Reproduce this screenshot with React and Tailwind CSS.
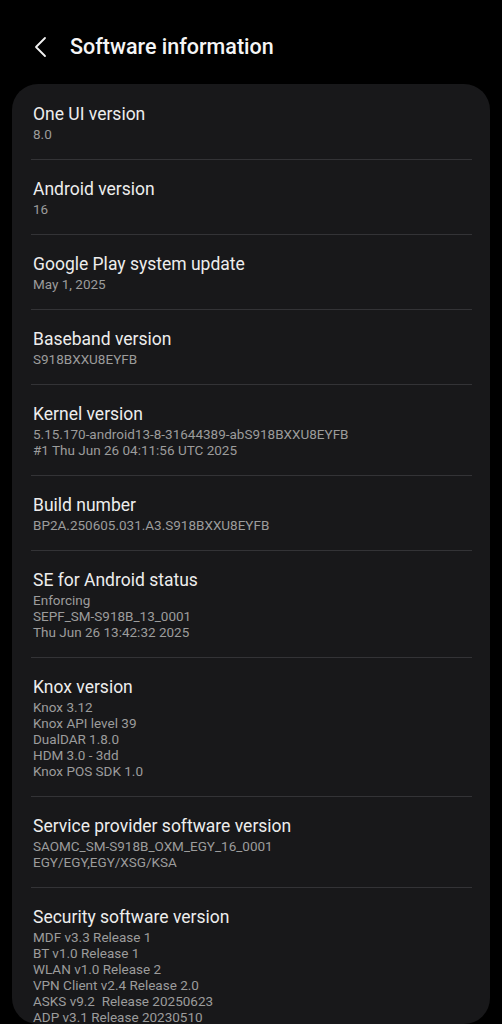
import React from 'react';

const items = [
  { title: 'One UI version', lines: ['8.0'] },
  { title: 'Android version', lines: ['16'] },
  { title: 'Google Play system update', lines: ['May 1, 2025'] },
  { title: 'Baseband version', lines: ['S918BXXU8EYFB'] },
  {
    title: 'Kernel version',
    lines: ['5.15.170-android13-8-31644389-abS918BXXU8EYFB', '#1 Thu Jun 26 04:11:56 UTC 2025'],
  },
  { title: 'Build number', lines: ['BP2A.250605.031.A3.S918BXXU8EYFB'] },
  {
    title: 'SE for Android status',
    lines: ['Enforcing', 'SEPF_SM-S918B_13_0001', 'Thu Jun 26 13:42:32 2025'],
  },
  {
    title: 'Knox version',
    lines: ['Knox 3.12', 'Knox API level 39', 'DualDAR 1.8.0', 'HDM 3.0 - 3dd', 'Knox POS SDK 1.0'],
  },
  {
    title: 'Service provider software version',
    lines: ['SAOMC_SM-S918B_OXM_EGY_16_0001', 'EGY/EGY,EGY/XSG/KSA'],
  },
  {
    title: 'Security software version',
    lines: [
      'MDF v3.3 Release 1',
      'BT v1.0 Release 1',
      'WLAN v1.0 Release 2',
      'VPN Client v2.4 Release 2.0',
      'ASKS v9.2  Release 20250623',
      'ADP v3.1 Release 20230510',
    ],
  },
];

function InfoRow({ title, lines, last }) {
  return (
    <div className="pl-[19px] pr-[18px]">
      <div className="pt-[18px] pb-[17px] pl-[2px]">
        <div className="text-[17.5px] leading-[22px] text-[#ededed]">{title}</div>
        <div className="mt-px">
          {lines.map((l, i) => (
            <div key={i} className="text-[13.5px] leading-[16px] text-[#9c9c9c] whitespace-pre">
              {l}
            </div>
          ))}
        </div>
      </div>
      {!last && <div className="h-px bg-[#333336]" />}
    </div>
  );
}

export default function App() {
  return (
    <div
      className="flex h-[1024px] w-[502px] flex-col overflow-hidden bg-black"
      style={{ fontFamily: 'Roboto, "Noto Sans", sans-serif' }}
    >
      <div className="flex h-[84px] shrink-0 items-center pt-[10px] pl-[33px]">
        <svg width="16" height="22" viewBox="0 0 16 22" fill="none">
          <path d="M12 2 L3 11 L12 20" stroke="#f2f2f2" strokeWidth="1.8" strokeLinecap="round" strokeLinejoin="round" />
        </svg>
        <h1 className="ml-[21px] text-[21.5px] font-medium text-[#f5f5f5]">Software information</h1>
      </div>
      <div className="mx-[12px] h-[940px] shrink-0 overflow-hidden rounded-[26px] bg-[#18181a] pt-px">
        {items.map((it, i) => (
          <InfoRow key={it.title} title={it.title} lines={it.lines} last={i === items.length - 1} />
        ))}
      </div>
    </div>
  );
}
